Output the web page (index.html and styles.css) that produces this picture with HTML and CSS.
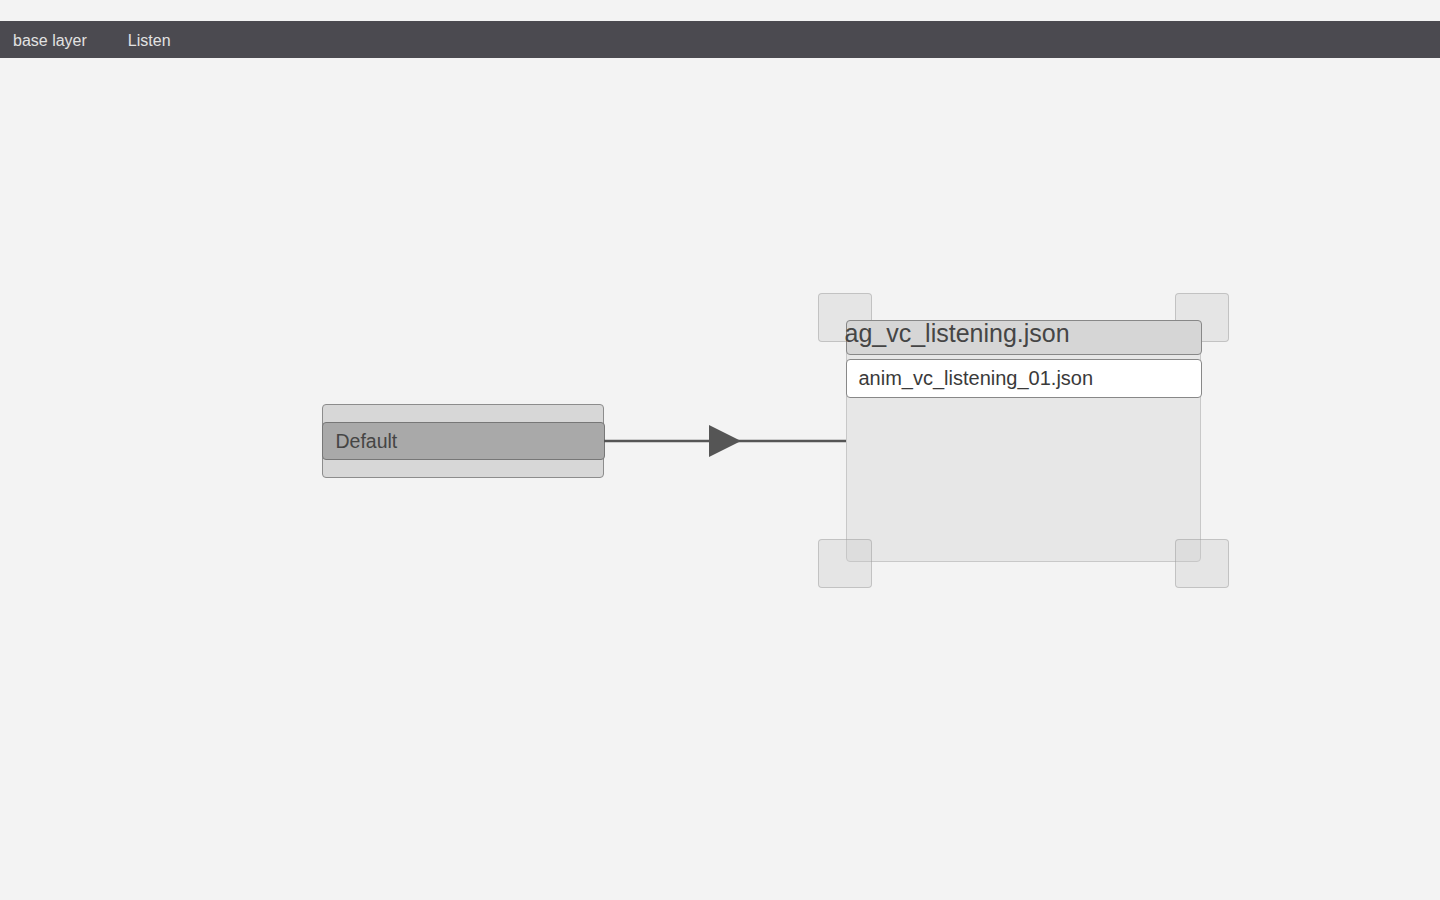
FILE: index.html
```html
<!DOCTYPE html>
<html lang="en">

<head>
    <meta charset="UTF-8">
    <meta name="viewport" content="width=device-width, initial-scale=1.0">
    <title>State Graph</title>
    <link rel="stylesheet" href="styles.css">
</head>

<body>
    <div class="menu-bar no-select">
        <div class="menu-item">base layer</div>
        <div class="menu-item">Listen</div>
    </div>

    <div class="canvas">

        <!-- entry state -->
        <div class="state default-state">
            <div class="state-name">Default</div>
        </div>

        <!-- transition -->
        <svg class="edge" width="242" height="34" viewBox="0 0 242 34">
            <line x1="0" y1="17" x2="242" y2="17" stroke="#555555" stroke-width="2.5" />
            <polygon points="105,1 137,17 105,33" fill="#555555" />
        </svg>

        <!-- selected state with resize handles -->
        <div class="handle handle-tl"></div>
        <div class="handle handle-tr"></div>

        <div class="group">
            <div class="group-title">ag_vc_listening.json</div>
            <div class="group-item">anim_vc_listening_01.json</div>
        </div>

        <div class="handle handle-bl"></div>
        <div class="handle handle-br"></div>

    </div>
</body>

</html>
```

FILE: styles.css
```css
* {
    box-sizing: border-box;
    font-family: "Liberation Sans", "Arial", sans-serif;
}

html,
body {
    margin: 0;
    height: 100vh;
    overflow: hidden;
}

body {
    background-color: #f3f3f3;
    padding-top: 21px;
}

.menu-bar {
    display: flex;
    align-items: center;
    height: 37px;
    background-color: #4b4a50;
    padding-left: 13px;
    padding-top: 2px;
    gap: 41px;
}

.menu-item {
    color: #e2e2e2;
    font-size: 16px;
}

.canvas {
    position: relative;
    height: calc(100vh - 58px);
}

/* canvas coords are page coords minus 58px */

.state {
    position: absolute;
    background-color: #d7d7d7;
    border: 1.5px solid #8c8c8c;
    border-radius: 4px;
}

.default-state {
    left: 322px;
    top: 346px;
    width: 282px;
    height: 74px;
    display: flex;
    flex-direction: column;
    justify-content: center;
}

.state-name {
    height: 38px;
    margin: 0 -1.5px;
    display: flex;
    align-items: center;
    padding-left: 13px;
    background-color: #a9a9a9;
    border: 1.5px solid #777777;
    border-radius: 4px;
    color: #454545;
    font-size: 19.5px;
}

.edge {
    position: absolute;
    left: 604px;
    top: 366px;
}

.group {
    position: absolute;
    left: 846px;
    top: 262px;
    width: 355px;
    height: 242px;
    background-color: #e7e7e7;
    border: 1.5px solid #c8c8c8;
    border-radius: 4px;
    display: flex;
    flex-direction: column;
    gap: 4px;
}

.group-title {
    height: 35px;
    margin: -1.5px -1.5px 0;
    background-color: #d6d6d6;
    border: 1.5px solid #888888;
    border-radius: 4px;
    color: #454545;
    font-size: 25px;
    line-height: 24px;
    text-indent: -2px;
    white-space: nowrap;
}

.group-item {
    height: 39px;
    margin: 0 -1.5px;
    display: flex;
    align-items: center;
    padding-left: 12px;
    background-color: #ffffff;
    border: 1.5px solid #888888;
    border-radius: 4px;
    color: #3a3a3a;
    font-size: 20px;
}

.handle {
    position: absolute;
    width: 54px;
    height: 49px;
    background-color: rgba(200, 200, 200, 0.3);
    border: 1.5px solid rgba(140, 140, 140, 0.4);
    border-radius: 4px;
}

.handle-tl {
    left: 818px;
    top: 235px;
}

.handle-tr {
    left: 1175px;
    top: 235px;
}

.handle-bl {
    left: 818px;
    top: 481px;
}

.handle-br {
    left: 1175px;
    top: 481px;
}

.no-select {
    user-select: none;
}
```
